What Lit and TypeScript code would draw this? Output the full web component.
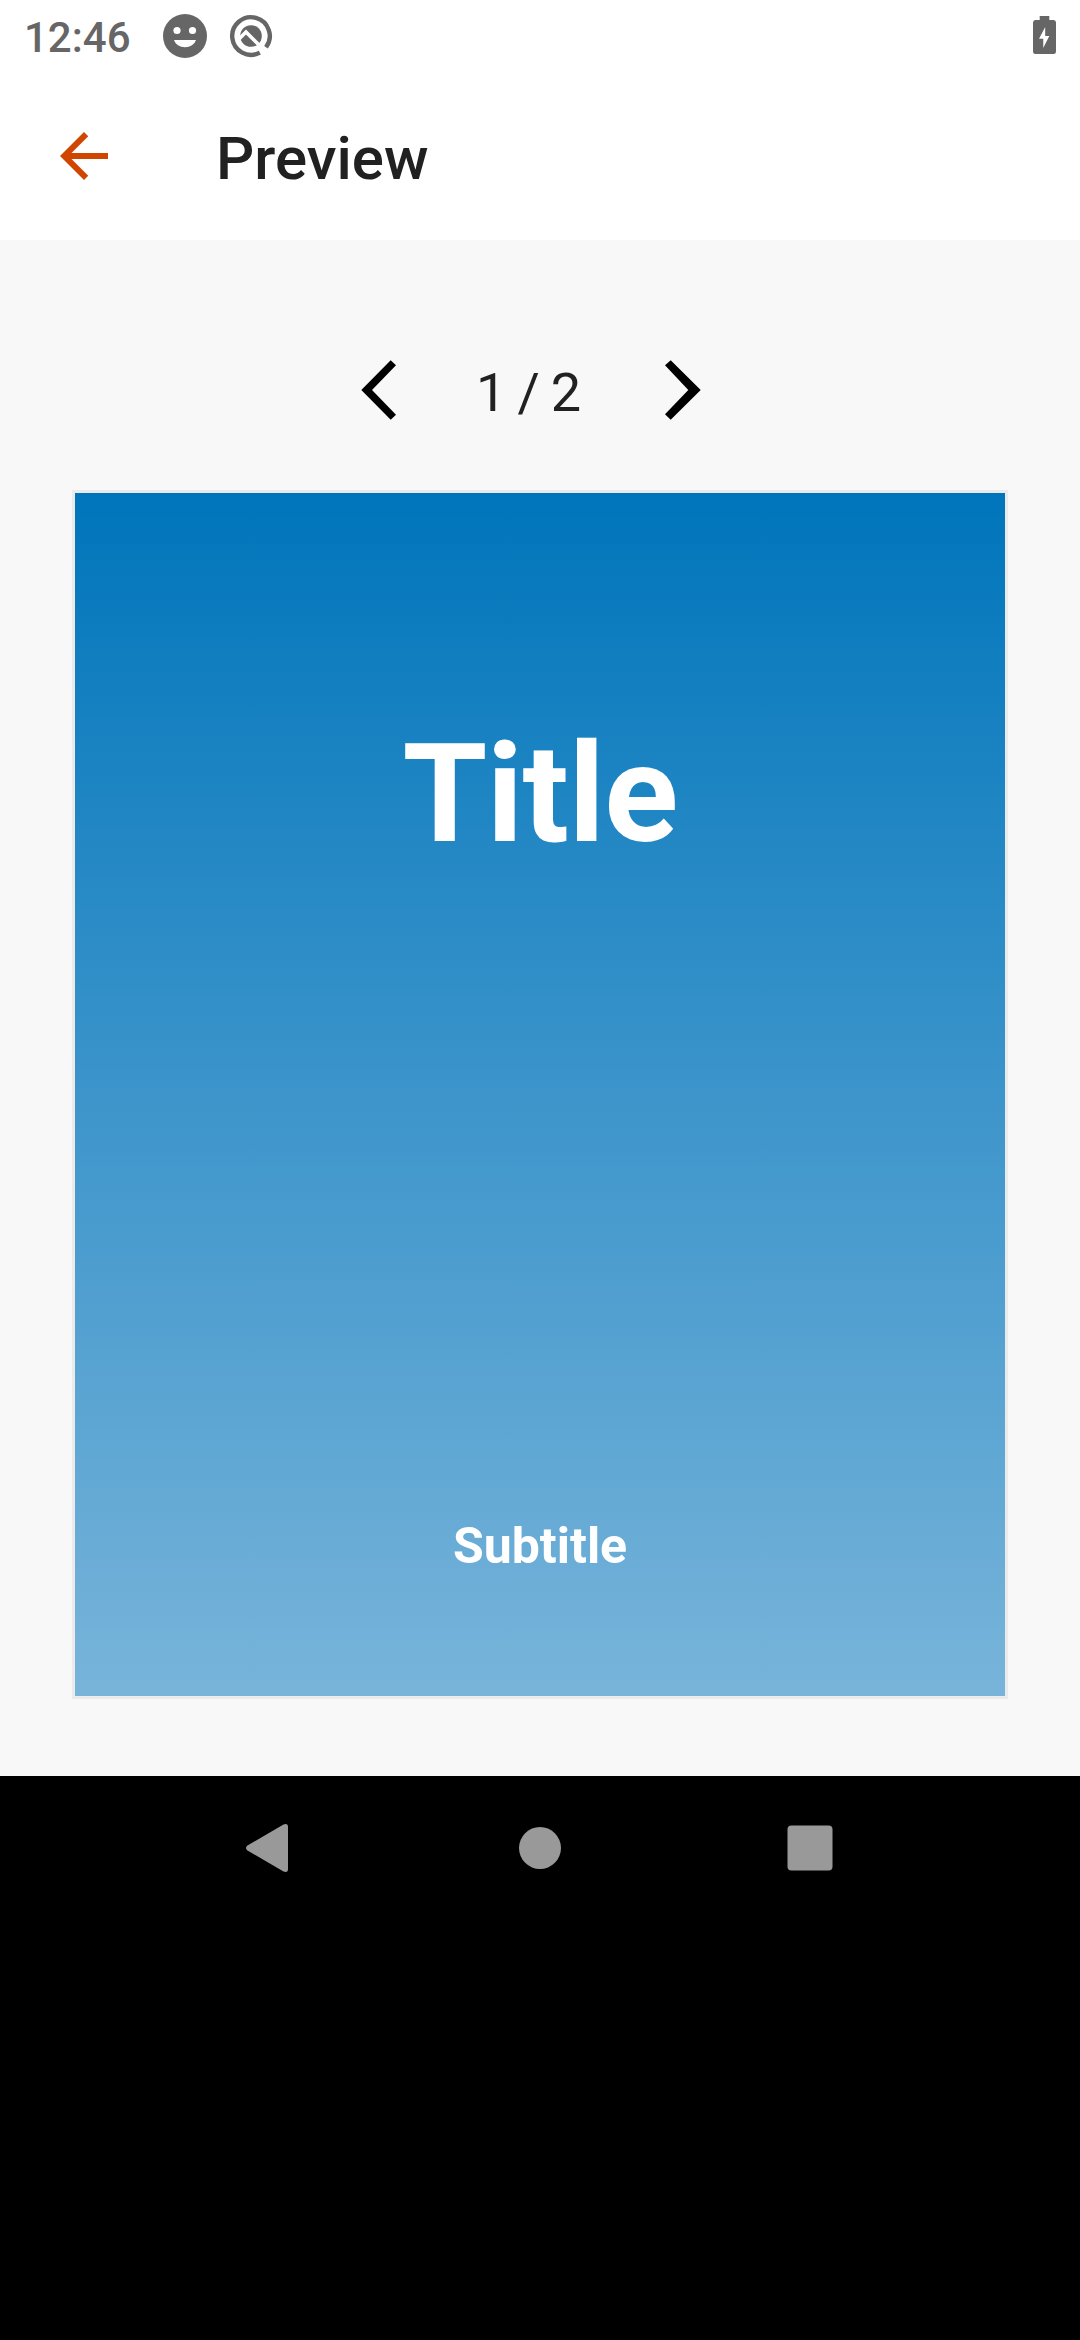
import { LitElement, html, css } from "lit";
import { customElement, property } from "lit/decorators.js";

@customElement("status-bar")
class StatusBar extends LitElement {
  static styles = css`
    :host { display: flex; height: 72px; align-items: center; padding: 0 24px; color: #666; }
    .time { font: 500 42px/72px Roboto, sans-serif; width: 136px; padding-top: 3px; }
    .face { width: 48px; height: 48px; margin-right: 20px; margin-left: 1px; }
    .ring { width: 44px; height: 44px; }
    .spacer { flex: 1; }
    .battery { width: 23px; height: 40px; margin-bottom: 2px; }
    svg { display: block; flex: none; }
  `;
  render() {
    return html`
      <span class="time">12:46</span>
      <svg class="face" viewBox="0 0 48 48">
        <circle cx="24" cy="24" r="22" fill="#666" />
        <circle cx="16" cy="18.5" r="3.6" fill="#fff" />
        <circle cx="31.5" cy="18.5" r="3.6" fill="#fff" />
        <path d="M13 28h22a11.3 9.5 0 0 1-22 0z" fill="#fff" />
      </svg>
      <svg class="ring" viewBox="0 0 44 44">
        <path d="M30.800 38.600A18.800 18.800 0 1 1 37 33.300" fill="none" stroke="#666" stroke-width="4.400" />
        <circle cx="22" cy="22" r="10.800" fill="#666" />
        <path d="M9.500 25.500L17 18L37 38" fill="none" stroke="#fff" stroke-width="3.600" />
      </svg>
      <span class="spacer"></span>
      <svg class="battery" viewBox="0 0 24 40" preserveAspectRatio="none">
        <path d="M7 1h10v4h4.500a2.500 2.500 0 0 1 2.500 2.500v29a2.500 2.500 0 0 1-2.500 2.500H2.500a2.500 2.500 0 0 1-2.500-2.500V7.500a2.500 2.500 0 0 1 2.500-2.500h4.500z" fill="#666" />
        <path d="M12.700 12v9H17L10.700 33v-9.300H6.300z" fill="#fff" />
      </svg>
    `;
  }
}

@customElement("app-bar")
class AppBar extends LitElement {
  @property() heading = "";
  static styles = css`
    :host { display: flex; height: 168px; align-items: flex-start; padding: 48px 48px 0; box-sizing: border-box; color: #212121; }
    svg { display: block; width: 72px; height: 72px; margin-right: 96px; }
    h1 { margin: 3px 0 0; font: 500 60px/72px Roboto, sans-serif; }
  `;
  render() {
    return html`
      <svg viewBox="0 0 24 24">
        <path fill="#d04600" d="M20 11H7.830l5.590-5.590L12 4l-8 8 8 8 1.410-1.410L7.830 13H20v-2z" />
      </svg>
      <h1>${this.heading}</h1>
    `;
  }
}

@customElement("page-stepper")
class PageStepper extends LitElement {
  @property({ type: Number }) current = 1;
  @property({ type: Number }) total = 1;
  static styles = css`
    :host { display: flex; height: 72px; align-items: center; }
    svg { display: block; width: 40px; height: 64px; flex: none; }
    .count { box-sizing: border-box; width: 264px; padding: 5px 6px 0 0; text-align: center; font: 400 54px/64px Roboto, sans-serif; letter-spacing: -1.2px; color: #212121; }
  `;
  render() {
    return html`
      <svg viewBox="0 0 40 64"><path d="M31.700 2.300L37 7.300L13 32L37 56.700L31.700 61.700L2.300 32z" /></svg>
      <span class="count">${this.current} / ${this.total}</span>
      <svg viewBox="0 0 40 64"><path d="M7.700 2.300L37.700 32L7.700 61.700L2 56.300L25.300 32L2 7.300z" /></svg>
    `;
  }
}

@customElement("nav-bar")
class NavBar extends LitElement {
  static styles = css`
    :host { display: flex; justify-content: center; padding-top: 36px; background: #000; flex: 1; }
    svg { display: block; width: 72px; height: 72px; margin: 0 99px; }
  `;
  render() {
    return html`
      <svg viewBox="0 0 72 72"><path d="M13.500 33.500L49.500 12.500Q54 10.800 54 15V57Q54 61.200 49.500 59.500L13.500 38.500Q10.500 36 13.500 33.500z" fill="#999" /></svg>
      <svg viewBox="0 0 72 72"><circle cx="36" cy="36" r="21" fill="#999" /></svg>
      <svg viewBox="0 0 72 72"><rect x="13.500" y="13.500" width="45" height="45" rx="4" fill="#999" /></svg>
    `;
  }
}

@customElement("app-root")
class AppRoot extends LitElement {
  static styles = css`
    :host { display: flex; flex-direction: column; width: 1080px; height: 2340px; background: #fff; overflow: hidden; }
    .content { height: 1536px; background: #f8f8f8; padding: 114px 72px 0; box-sizing: border-box; }
    page-stepper { margin-left: 287px; }
    .slide {
      display: flex; flex-direction: column; align-items: center; box-sizing: border-box;
      height: 1209px; margin-top: 64px; border: 3px solid #ebebeb;
      background: linear-gradient(#0075bb, #78b4da) padding-box;
      color: #fff; font-family: Roboto, sans-serif; font-weight: 700;
    }
    .title { font-size: 137px; line-height: 160px; margin-top: 221px; letter-spacing: -0.5px; }
    .subtitle { font-size: 50px; line-height: 60px; margin-top: 642px; }
  `;
  render() {
    return html`
      <status-bar></status-bar>
      <app-bar heading="Preview"></app-bar>
      <main class="content">
        <page-stepper .current=${1} .total=${2}></page-stepper>
        <section class="slide">
          <div class="title">Title</div>
          <div class="subtitle">Subtitle</div>
        </section>
      </main>
      <nav-bar></nav-bar>
    `;
  }
}
